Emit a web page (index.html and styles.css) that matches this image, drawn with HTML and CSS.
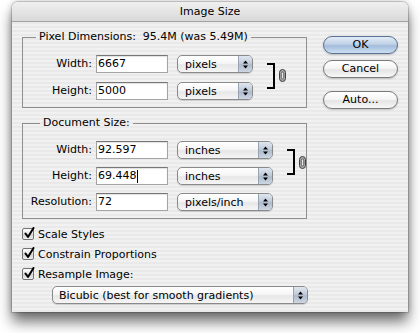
FILE: index.html
```html
<!DOCTYPE html>
<html>
<head>
<meta charset="utf-8">
<link rel="stylesheet" href="styles.css">
</head>
<body>
<div class="window">
  <div class="titlebar">Image Size</div>
  <div class="content">
    <div class="main">
      <div class="group g1">
        <span class="legend">Pixel Dimensions:&nbsp; 95.4M (was 5.49M)</span>
        <div class="rows">
          <span class="lbl">Width:</span>
          <div class="field">6667</div>
          <div class="popup"><span class="ptext">pixels</span><span class="arrows"><svg width="5" height="9" viewBox="0 0 5 9"><path d="M2.5 0.5 L5 3.5 L0 3.5 Z M0 5.5 L5 5.5 L2.5 8.5 Z" fill="#000"/></svg></span></div>
          <div class="linkcell">
            <div class="bracket"></div>
            <svg class="chain" width="7" height="13" viewBox="0 0 7 13"><rect x="0.5" y="0.5" width="6" height="12" rx="3" fill="#a9a9a9" stroke="#3f3f3f"/><rect x="2.3" y="3" width="2.4" height="7" rx="1.2" fill="#e6e6e6" stroke="#3f3f3f" stroke-width="0.7"/></svg>
          </div>
          <span class="lbl">Height:</span>
          <div class="field">5000</div>
          <div class="popup"><span class="ptext">pixels</span><span class="arrows"><svg width="5" height="9" viewBox="0 0 5 9"><path d="M2.5 0.5 L5 3.5 L0 3.5 Z M0 5.5 L5 5.5 L2.5 8.5 Z" fill="#000"/></svg></span></div>
        </div>
      </div>

      <div class="group g2">
        <span class="legend">Document Size:</span>
        <div class="rows">
          <span class="lbl">Width:</span>
          <div class="field">92.597</div>
          <div class="popup"><span class="ptext">inches</span><span class="arrows"><svg width="5" height="9" viewBox="0 0 5 9"><path d="M2.5 0.5 L5 3.5 L0 3.5 Z M0 5.5 L5 5.5 L2.5 8.5 Z" fill="#000"/></svg></span></div>
          <div class="linkcell">
            <div class="bracket"></div>
            <svg class="chain" width="7" height="13" viewBox="0 0 7 13"><rect x="0.5" y="0.5" width="6" height="12" rx="3" fill="#a9a9a9" stroke="#3f3f3f"/><rect x="2.3" y="3" width="2.4" height="7" rx="1.2" fill="#e6e6e6" stroke="#3f3f3f" stroke-width="0.7"/></svg>
          </div>
          <span class="lbl">Height:</span>
          <div class="field">69.448<span class="caret"></span></div>
          <div class="popup"><span class="ptext">inches</span><span class="arrows"><svg width="5" height="9" viewBox="0 0 5 9"><path d="M2.5 0.5 L5 3.5 L0 3.5 Z M0 5.5 L5 5.5 L2.5 8.5 Z" fill="#000"/></svg></span></div>
          <span class="lbl">Resolution:</span>
          <div class="field">72</div>
          <div class="popup"><span class="ptext">pixels/inch</span><span class="arrows"><svg width="5" height="9" viewBox="0 0 5 9"><path d="M2.5 0.5 L5 3.5 L0 3.5 Z M0 5.5 L5 5.5 L2.5 8.5 Z" fill="#000"/></svg></span></div>
        </div>
      </div>

      <div class="checks">
        <div class="check"><span class="cbox"><svg width="12" height="13" viewBox="0 0 12 13"><path d="M2.5 6.5 L5 10 L10.5 1" fill="none" stroke="#000" stroke-width="2" stroke-linecap="round" stroke-linejoin="round"/></svg></span>Scale Styles</div>
        <div class="check"><span class="cbox"><svg width="12" height="13" viewBox="0 0 12 13"><path d="M2.5 6.5 L5 10 L10.5 1" fill="none" stroke="#000" stroke-width="2" stroke-linecap="round" stroke-linejoin="round"/></svg></span>Constrain Proportions</div>
        <div class="check"><span class="cbox"><svg width="12" height="13" viewBox="0 0 12 13"><path d="M2.5 6.5 L5 10 L10.5 1" fill="none" stroke="#000" stroke-width="2" stroke-linecap="round" stroke-linejoin="round"/></svg></span>Resample Image:</div>
        <div class="popup wide"><span class="ptext">Bicubic (best for smooth gradients)</span><span class="arrows"><svg width="5" height="9" viewBox="0 0 5 9"><path d="M2.5 0.5 L5 3.5 L0 3.5 Z M0 5.5 L5 5.5 L2.5 8.5 Z" fill="#000"/></svg></span></div>
      </div>
    </div>

    <div class="buttons">
      <div class="btn ok">OK</div>
      <div class="btn cancel">Cancel</div>
      <div class="btn auto">Auto...</div>
    </div>
  </div>
</div>
</body>
</html>
```
FILE: styles.css
```css
html, body {
  margin: 0;
  padding: 0;
  background: #ffffff;
}
body {
  min-height: 333px;
  padding-top: 2px;
  box-sizing: border-box;
  font-family: "DejaVu Sans", "Open Sans", sans-serif;
  font-size: 11px;
  color: #000;
}
.window {
  margin: 0 0 0 12px;
  width: 396px;
  height: 310px;
  border-radius: 6px 6px 0 0;
  background: repeating-linear-gradient(#f1f1f1 0 2px, #e9e9e9 2px 4px);
  background-attachment: fixed;
  box-shadow: 0 0 0 1px rgba(0, 0, 0, 0.14), 0 0 6px rgba(0, 0, 0, 0.25), 0 10px 14px rgba(0, 0, 0, 0.55);
}
.titlebar {
  height: 19px;
  line-height: 19px;
  border-bottom: 1px solid #a2a2a2;
  border-radius: 6px 6px 0 0;
  background: linear-gradient(#f0f0f0, #d9d9d9);
  text-align: center;
}
.content {
  display: flex;
  padding: 0 10px;
}
.main {
  width: 285px;
  padding-top: 15px;
}
.group {
  position: relative;
  border: 1px solid #8f8f8f;
  padding: 17px 0 7px 0;
}
.g2 {
  margin-top: 15px;
}
.legend {
  position: absolute;
  top: -9px;
  left: 13px;
  padding: 0 3px;
  line-height: 15px;
  background: repeating-linear-gradient(#f1f1f1 0 2px, #e9e9e9 2px 4px);
  background-attachment: fixed;
}
.g2 .legend {
  left: 17px;
}
.rows {
  display: grid;
  grid-template-columns: 73px 81px 83px auto;
  grid-auto-rows: 18px;
  row-gap: 9px;
}
.g2 .rows {
  grid-template-columns: 73px 81px 103px auto;
  row-gap: 8px;
}
.lbl {
  text-align: right;
  padding-right: 4px;
  line-height: 18px;
}
.field {
  width: 72px;
  height: 18px;
  box-sizing: border-box;
  background: #fff;
  border: 1px solid #a4a4a4;
  border-top-color: #767676;
  box-shadow: inset 0 1px 1px rgba(0, 0, 0, 0.12);
  padding-left: 1px;
  line-height: 16px;
  display: flex;
  align-items: center;
}
.caret {
  display: inline-block;
  width: 1px;
  height: 13px;
  background: #000;
}
.popup {
  width: 76px;
  height: 18px;
  box-sizing: border-box;
  border: 1px solid #8a8a8a;
  border-radius: 5px;
  background: linear-gradient(#ffffff 0, #f6f6f6 45%, #e7e7e7 55%, #f5f5f5 100%);
  box-shadow: 0 1px 1px rgba(0, 0, 0, 0.15);
  display: flex;
  align-items: center;
  overflow: hidden;
}
.g2 .popup {
  width: 96px;
}
.ptext {
  flex: 1;
  padding-left: 7px;
  white-space: nowrap;
}
.arrows {
  width: 14px;
  align-self: stretch;
  box-sizing: border-box;
  border-left: 1px solid #98a3b1;
  background: linear-gradient(#dfe6ef 0, #c1ccda 45%, #aebbcc 55%, #cdd7e3 100%);
  display: flex;
  align-items: center;
  justify-content: center;
}
.linkcell {
  grid-column: 4;
  grid-row: 1 / span 2;
  display: flex;
  align-items: center;
  padding-left: 7px;
  padding-bottom: 4px;
}
.g2 .linkcell {
  padding-left: 7px;
  padding-bottom: 2px;
}
.bracket {
  width: 6px;
  height: 22px;
  border: 2px solid #000;
  border-left: 0;
}
.chain {
  margin-left: 4px;
  display: block;
}
.checks {
  margin-top: 5px;
}
.check {
  display: flex;
  align-items: center;
  height: 20px;
  gap: 4px;
}
.cbox {
  position: relative;
  width: 12px;
  height: 12px;
  box-sizing: border-box;
  border: 1px solid #737373;
  border-radius: 2px;
  background: linear-gradient(#ffffff, #e4e4e4 50%, #d2d2d2 55%, #eeeeee);
}
.cbox svg {
  position: absolute;
  left: 0;
  top: -2px;
}
.popup.wide {
  width: 256px;
  margin: 2px 0 0 30px;
}
.wide .ptext {
  padding-left: 6px;
}
.buttons {
  margin-left: 16px;
  padding-top: 14px;
  width: 77px;
  display: flex;
  flex-direction: column;
}
.btn {
  height: 18px;
  box-sizing: border-box;
  border: 1px solid #7a7a7a;
  border-radius: 9px;
  background: linear-gradient(#ffffff 0, #f5f5f5 45%, #e4e4e4 55%, #f8f8f8 100%);
  box-shadow: 0 1px 2px rgba(0, 0, 0, 0.2);
  text-align: center;
  line-height: 16px;
}
.ok {
  border-color: #5a7193;
  background: linear-gradient(#e3ecf7 0, #bfd1e7 45%, #a3bcdb 55%, #cddff2 100%);
}
.cancel {
  margin-top: 6px;
}
.auto {
  margin-top: 13px;
}
```
